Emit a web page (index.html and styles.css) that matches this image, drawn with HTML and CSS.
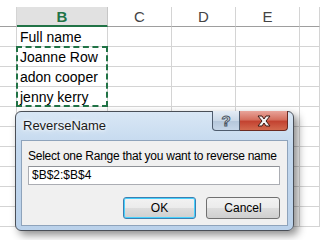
FILE: index.html
```html
<!doctype html>
<html>
  <head>
    <meta charset="utf-8">
    <title>ReverseName</title>
    <link rel="stylesheet" href="styles.css">
  </head>
  <body>
    <div class="sheet">
      <div class="top"></div>
      <div class="grid">
        <div class="hd"></div>
        <div class="hd sel">B</div>
        <div class="hd">C</div>
        <div class="hd">D</div>
        <div class="hd">E</div>
        <div class="hd"></div>

        <div class="c"></div><div class="c">Full name</div><div class="c"></div><div class="c"></div><div class="c"></div><div class="c"></div>
        <div class="c"></div><div class="c">Joanne Row</div><div class="c"></div><div class="c"></div><div class="c"></div><div class="c"></div>
        <div class="c"></div><div class="c">adon cooper</div><div class="c"></div><div class="c"></div><div class="c"></div><div class="c"></div>
        <div class="c"></div><div class="c">jenny kerry</div><div class="c"></div><div class="c"></div><div class="c"></div><div class="c"></div>
        <div class="c"></div><div class="c"></div><div class="c"></div><div class="c"></div><div class="c"></div><div class="c"></div>
        <div class="c"></div><div class="c"></div><div class="c"></div><div class="c"></div><div class="c"></div><div class="c"></div>
        <div class="c"></div><div class="c"></div><div class="c"></div><div class="c"></div><div class="c"></div><div class="c"></div>
        <div class="c"></div><div class="c"></div><div class="c"></div><div class="c"></div><div class="c"></div><div class="c"></div>
        <div class="c"></div><div class="c"></div><div class="c"></div><div class="c"></div><div class="c"></div><div class="c"></div>
        <div class="c"></div><div class="c"></div><div class="c"></div><div class="c"></div><div class="c"></div><div class="c"></div>
      </div>
      <div class="marquee"></div>
    </div>

    <div class="dialog">
      <div class="titlebar">ReverseName</div>
      <div class="caption">
        <span class="cap help">?</span>
        <span class="cap close">
          <svg width="16" height="12" viewBox="0 0 16 12">
            <path d="M2 1 H6 L8 4 L10 1 H14 L10 6 L14 11 H10 L8 8 L6 11 H2 L6 6 Z"></path>
          </svg>
        </span>
      </div>
      <div class="client">
        <p class="label">Select one Range that you want to reverse name</p>
        <div class="field">$B$2:$B$4</div>
        <div class="buttons">
          <button class="btn default">OK</button>
          <button class="btn">Cancel</button>
        </div>
      </div>
    </div>
  </body>
</html>
```

FILE: styles.css
```css
html {
  box-sizing: border-box;
}

*, *:before, *:after {
  box-sizing: inherit;
}

body {
  margin: 0;
  width: 320px;
  height: 240px;
  overflow: hidden;
  background: #fff;
  font-family: "Liberation Sans", Arial, sans-serif;
  position: relative;
}

.sheet {
  position: relative;
}

.top {
  height: 7px;
}

.grid {
  display: grid;
  grid-template-columns: 17px 91px 64px 64px 64px 20px;
  grid-auto-rows: 20px;
}

.hd {
  border-right: 1px solid #d4d4d4;
  border-bottom: 1px solid #9e9e9e;
  color: #444;
  font-size: 15px;
  text-align: center;
  line-height: 19px;
}

.hd.sel {
  background: #e1e1e1;
  color: #217346;
  font-weight: bold;
  border-bottom: 2px solid #217346;
  border-right-color: #c6c6c6;
}

.c {
  border-right: 1px solid #d4d4d4;
  border-bottom: 1px solid #d4d4d4;
  font-size: 14px;
  line-height: 20px;
  padding-left: 3px;
  color: #000;
  white-space: nowrap;
}

.marquee {
  position: absolute;
  left: 16px;
  top: 46px;
  width: 92px;
  height: 61px;
  border: 2px dashed #217346;
}

.dialog {
  position: absolute;
  left: 15px;
  top: 111px;
  width: 279px;
  height: 120px;
  border: 1px solid #4a4f57;
  border-radius: 6px;
  background: linear-gradient(180deg, #d9e7f5 0%, #c3d8ee 30%, #bad1ea 100%);
  box-shadow: 4px 4px 9px rgba(0, 0, 0, 0.45);
  padding: 0 5px 4px 5px;
  display: flex;
  flex-direction: column;
}

.titlebar {
  height: 28px;
  padding-left: 2px;
  font-size: 13px;
  line-height: 28px;
  color: #1a1a1a;
  text-shadow: 0 0 6px #fff, 0 0 3px #fff;
}

.caption {
  position: absolute;
  top: -1px;
  right: 5px;
  display: flex;
}

.cap {
  height: 20px;
  border: 1px solid #4e5c6e;
  border-top: none;
  text-align: center;
  display: flex;
  align-items: center;
  justify-content: center;
}

.help {
  width: 28px;
  border-radius: 0 0 0 4px;
  background: linear-gradient(180deg, #e4ecf5 0%, #cad8e7 50%, #b4c6da 51%, #c6d6e8 100%);
  font-size: 15px;
  font-weight: bold;
  color: #eef1f4;
  -webkit-text-stroke: 1px #4b5866;
}

.close {
  width: 48px;
  border-left: none;
  border-radius: 0 0 4px 0;
  background: linear-gradient(180deg, #e8a49a 0%, #d5705f 45%, #c34331 55%, #d3694e 100%);
  border-color: #6b2a22;
}

.close path {
  fill: #f4f4f4;
  stroke: #3d1a14;
  stroke-width: 1;
}

.client {
  flex: 1;
  background: #f0f0f0;
  border: 1px solid #8ea3bb;
  padding: 8px 6px 0 6px;
}

.label {
  margin: 0;
  font-size: 12px;
  letter-spacing: -0.25px;
  line-height: 15px;
  color: #000;
  white-space: nowrap;
}

.field {
  margin-top: 2px;
  width: 252px;
  height: 19px;
  border: 1px solid #abadb3;
  border-top-color: #8e9196;
  background: #fff;
  font-size: 12px;
  line-height: 17px;
  padding-left: 3px;
}

.buttons {
  display: flex;
  justify-content: flex-end;
  gap: 10px;
  margin-top: 12px;
  width: 252px;
}

.btn {
  width: 74px;
  height: 22px;
  border: 1px solid #707070;
  border-radius: 3px;
  background: linear-gradient(180deg, #f2f2f2 0%, #ebebeb 50%, #dddddd 51%, #cfcfcf 100%);
  font-family: "Liberation Sans", Arial, sans-serif;
  font-size: 12px;
  color: #000;
  padding: 0;
}

.btn.default {
  width: 73px;
  border-color: #3c7fb1;
  box-shadow: inset 0 0 0 1px #48d1fd;
}
```
